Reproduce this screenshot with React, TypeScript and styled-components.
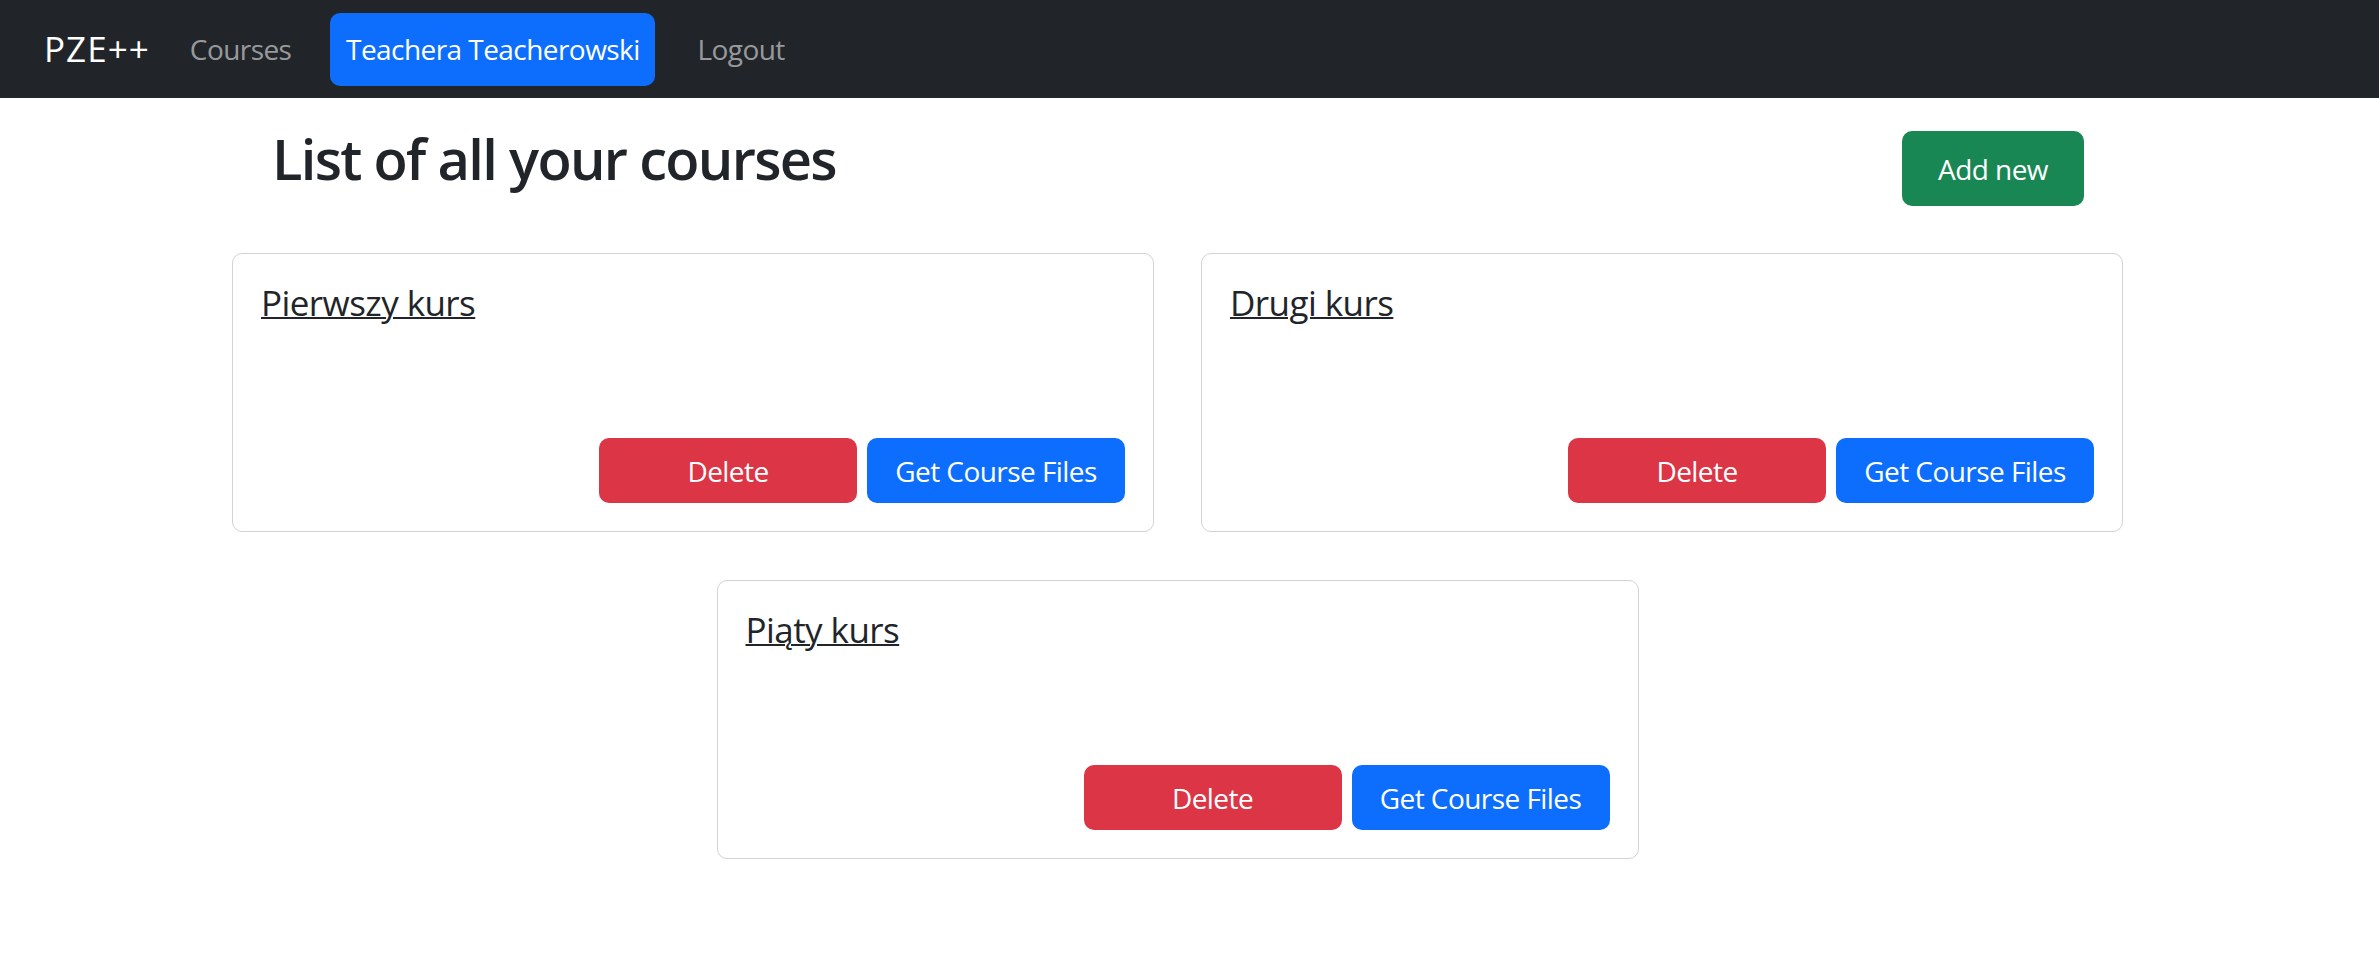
import React from "react";
import styled, { createGlobalStyle } from "styled-components";

const GlobalStyle = createGlobalStyle`
  html, body {
    margin: 0;
    padding: 0;
    background: #ffffff;
  }
  body {
    font-family: "Segoe UI", "Open Sans", "Noto Sans", sans-serif;
    font-size: 28px;
    line-height: 1.5;
    letter-spacing: -0.02em;
    color: #212529;
  }
  * {
    box-sizing: border-box;
  }
`;

const Navbar = styled.nav`
  height: 98px;
  background: #212529;
  display: flex;
  align-items: center;
  padding-left: 44px;
`;

const Brand = styled.a`
  font-size: 35px;
  line-height: 1.5;
  letter-spacing: 0.03em;
  color: #ffffff;
  text-decoration: none;
  margin-right: 26px;
`;

const NavLink = styled.a`
  font-size: 28px;
  line-height: 1.5;
  padding: 0 14px;
  color: rgba(255, 255, 255, 0.55);
  text-decoration: none;
`;

const UserButton = styled.a`
  display: flex;
  align-items: center;
  justify-content: center;
  width: 325px;
  height: 73px;
  margin: 0 28px 0 25px;
  border-radius: 10px;
  background: #0d6efd;
  color: #ffffff;
  font-size: 28px;
  text-decoration: none;
`;

const Main = styled.main`
  display: flex;
  flex-direction: column;
  align-items: center;
  padding-right: 24px;
`;

const Content = styled.div`
  width: 1893px;
`;

const Header = styled.div`
  display: flex;
  justify-content: space-between;
  align-items: flex-start;
  padding: 0 40px 0 41px;
`;

const Title = styled.h2`
  margin: 27px 0 0;
  font-size: 56px;
  line-height: 1.2;
  font-weight: 600;
  letter-spacing: -0.03em;
`;

const Button = styled.button<{ $variant: "success" | "danger" | "primary" }>`
  display: flex;
  align-items: center;
  justify-content: center;
  border: none;
  border-radius: 10px;
  font-family: inherit;
  font-size: 28px;
  line-height: 1.5;
  letter-spacing: inherit;
  color: #ffffff;
  cursor: pointer;
  background: ${(p) =>
    p.$variant === "success" ? "#198754" : p.$variant === "danger" ? "#dc3545" : "#0d6efd"};
`;

const AddButton = styled(Button)`
  margin-top: 33px;
  width: 182px;
  height: 75px;
`;

const Grid = styled.div`
  display: flex;
  flex-wrap: wrap;
  justify-content: center;
  column-gap: 47px;
  row-gap: 48px;
  margin-top: 47px;
`;

const Card = styled.div`
  width: 922px;
  height: 279px;
  border: 1px solid rgba(0, 0, 0, 0.175);
  border-radius: 10px;
  padding: 28px;
  display: flex;
  flex-direction: column;
`;

const CardTitle = styled.a`
  align-self: flex-start;
  font-size: 35px;
  line-height: 1.2;
  font-weight: 500;
  color: #212529;
  text-decoration: underline;
  text-decoration-thickness: 2px;
`;

const Actions = styled.div`
  margin-top: auto;
  display: flex;
  justify-content: flex-end;
  gap: 10px;
`;

const CardButton = styled(Button)`
  width: 258px;
  height: 65px;
`;

const courses = ["Pierwszy kurs", "Drugi kurs", "Piąty kurs"];

export default function App() {
  return (
    <>
      <GlobalStyle />
      <Navbar>
        <Brand href="#">PZE++</Brand>
        <NavLink href="#">Courses</NavLink>
        <UserButton href="#">Teachera Teacherowski</UserButton>
        <NavLink href="#">Logout</NavLink>
      </Navbar>
      <Main>
        <Content>
          <Header>
            <Title>List of all your courses</Title>
            <AddButton $variant="success">Add new</AddButton>
          </Header>
          <Grid>
            {courses.map((c) => (
              <Card key={c}>
                <CardTitle href="#">{c}</CardTitle>
                <Actions>
                  <CardButton $variant="danger">Delete</CardButton>
                  <CardButton $variant="primary">Get Course Files</CardButton>
                </Actions>
              </Card>
            ))}
          </Grid>
        </Content>
      </Main>
    </>
  );
}
